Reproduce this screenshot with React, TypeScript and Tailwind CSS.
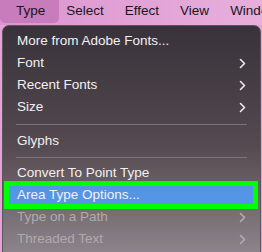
import React from 'react';

type Item =
  | { kind: 'item'; label: string; sub?: boolean; disabled?: boolean; active?: boolean }
  | { kind: 'sep'; h: string };

const items: Item[] = [
  { kind: 'item', label: 'More from Adobe Fonts...' },
  { kind: 'item', label: 'Font', sub: true },
  { kind: 'item', label: 'Recent Fonts', sub: true },
  { kind: 'item', label: 'Size', sub: true },
  { kind: 'sep', h: 'h-[12px]' },
  { kind: 'item', label: 'Glyphs' },
  { kind: 'sep', h: 'h-[10px]' },
  { kind: 'item', label: 'Convert To Point Type' },
  { kind: 'item', label: 'Area Type Options...', active: true },
  { kind: 'item', label: 'Type on a Path', sub: true, disabled: true },
  { kind: 'item', label: 'Threaded Text', sub: true, disabled: true },
];

function Chevron({ dim }: { dim?: boolean }) {
  return (
    <svg width="7" height="11" viewBox="0 0 7 11" className={dim ? 'text-[#b3acb1]' : 'text-[#eeeaed]'}>
      <polyline points="1.5,1.5 5.5,5.5 1.5,9.5" fill="none" stroke="currentColor" strokeWidth="1.6" strokeLinecap="round" strokeLinejoin="round" />
    </svg>
  );
}

export default function App() {
  return (
    <div
      className="relative w-[262px] h-[252px] overflow-hidden bg-[#e2a4d6] text-[13.5px]"
      style={{ fontFamily: '"Liberation Sans", Arial, sans-serif' }}
    >
      {/* Menu bar */}
      <div className="flex items-start h-[25px] bg-gradient-to-r from-[#dc95cf] to-[#e7afdc] text-[#1d141b] whitespace-nowrap">
        <div className="h-[23px] flex items-center pl-[16px] pr-[14px] rounded-b-[5px] bg-[#c97cbb]">Type</div>
        <div className="h-[23px] flex items-center gap-[21px] ml-[7px]">
          <span>Select</span>
          <span>Effect</span>
          <span>View</span>
          <span>Window</span>
        </div>
      </div>

      {/* Dropdown */}
      <div className="ml-[2px] w-[259px] h-[240px] rounded-t-[7px] border border-[#5c555b] bg-gradient-to-b from-[#39323a] via-[#544a50] to-[#938b91] pt-[4px]">
        {items.map((it, i) =>
          it.kind === 'sep' ? (
            <div key={i} className={`${it.h} flex items-center px-[13px]`}>
              <div className="h-px w-full bg-[#7c747a]" />
            </div>
          ) : (
            <div key={i} className="relative h-[22px] px-[5px]">
              <div
                className={`h-full flex items-center justify-between pl-[9px] pr-[9px] rounded-[4px] ${
                  it.active ? 'bg-[#5495e6]' : ''
                } ${it.disabled ? 'text-[#b0a9ae]' : 'text-[#f3f0f2]'}`}
              >
                <span>{it.label}</span>
                {it.sub && <Chevron dim={it.disabled} />}
              </div>
              {it.active && (
                <div className="absolute left-[1px] right-[2px] top-[-3px] bottom-[-3px] border-[5px] border-[#00ff00]" />
              )}
            </div>
          )
        )}
      </div>
    </div>
  );
}
